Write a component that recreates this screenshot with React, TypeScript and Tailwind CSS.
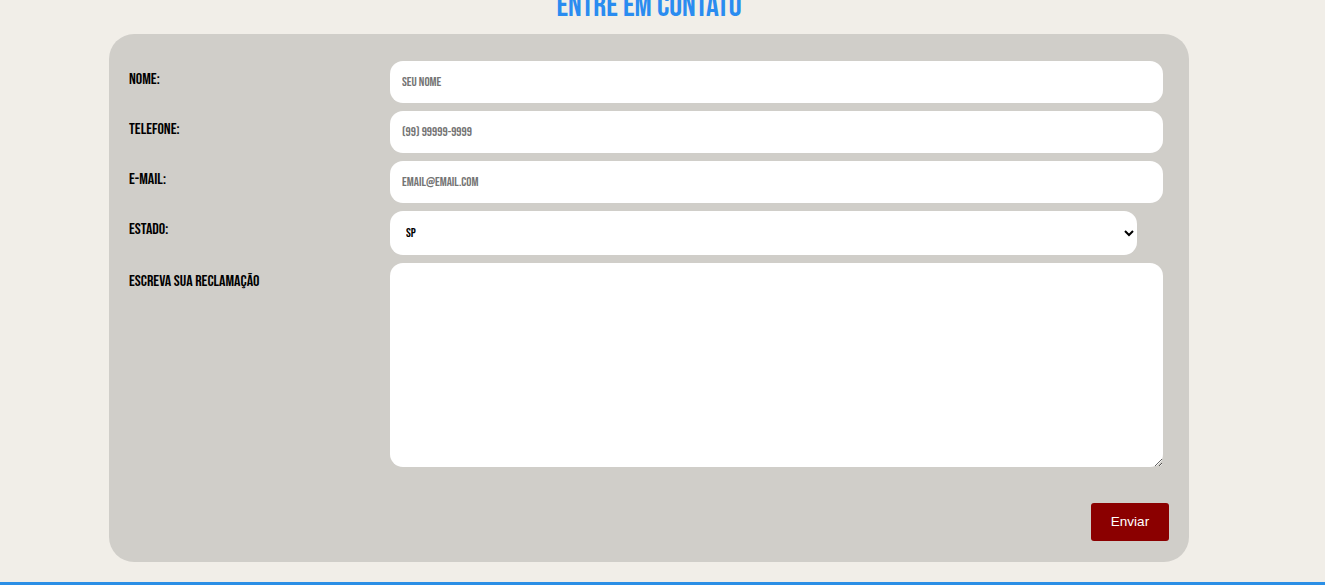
import { useState } from "react";

const bebas = "font-['Bebas_Neue','Liberation_Sans_Narrow',sans-serif]";

const fields = [
  { label: "NOME:", placeholder: "SEU NOME", type: "text" },
  { label: "TELEFONE:", placeholder: "(99) 99999-9999", type: "tel" },
  { label: "E-MAIL:", placeholder: "EMAIL@EMAIL.COM", type: "email" },
];

const labelCls = `${bebas} text-[16px] font-normal text-black pt-[10px] leading-[18px]`;

export default function App() {
  const [estado, setEstado] = useState("SP");

  return (
    <div className="min-h-[585px] bg-[#f1eee8] overflow-hidden relative">
      <div className="w-[1080px] ml-[109px]">
        <h2 className={`${bebas} text-center text-[32px] leading-none font-normal text-[#2a8cf0] -mt-[9px] h-[43px]`}>
          ENTRE EM CONTATO
        </h2>

        <form
          onSubmit={(e) => e.preventDefault()}
          className="rounded-[25px] bg-[#d0cec9] pt-[27px] pb-[21px] px-[20px]"
        >
          {fields.map((f) => (
            <div key={f.label} className="grid grid-cols-[261px_773px] mb-[8px]">
              <label className={labelCls}>{f.label}</label>
              <input
                type={f.type}
                placeholder={f.placeholder}
                className={`${bebas} h-[42px] rounded-[13px] bg-white px-[12px] text-[13px] text-black placeholder:text-[#757575] outline-none`}
              />
            </div>
          ))}

          <div className="grid grid-cols-[261px_747px] mb-[8px]">
            <label className={labelCls}>ESTADO:</label>
            <select
              value={estado}
              onChange={(e) => setEstado(e.target.value)}
              className={`${bebas} h-[44px] rounded-[13px] bg-white px-[12px] text-[13px] text-black outline-none`}
            >
              <option>SP</option>
              <option>RJ</option>
              <option>MG</option>
              <option>ES</option>
            </select>
          </div>

          <div className="grid grid-cols-[261px_773px]">
            <label className={labelCls}>ESCREVA SUA RECLAMAÇÃO</label>
            <textarea className="h-[204px] rounded-[13px] bg-white p-[12px] outline-none block" />
          </div>

          <div className="flex justify-end mt-[36px]">
            <button
              type="submit"
              className="h-[38px] w-[78px] rounded-[3px] bg-[#8b0000] text-[13.5px] text-white font-['Liberation_Sans',Arial,sans-serif]"
            >
              Enviar
            </button>
          </div>
        </form>
      </div>

      <div className="absolute left-0 right-0 top-[582px] h-[3px] bg-[#2b8fe6]" />
    </div>
  );
}
